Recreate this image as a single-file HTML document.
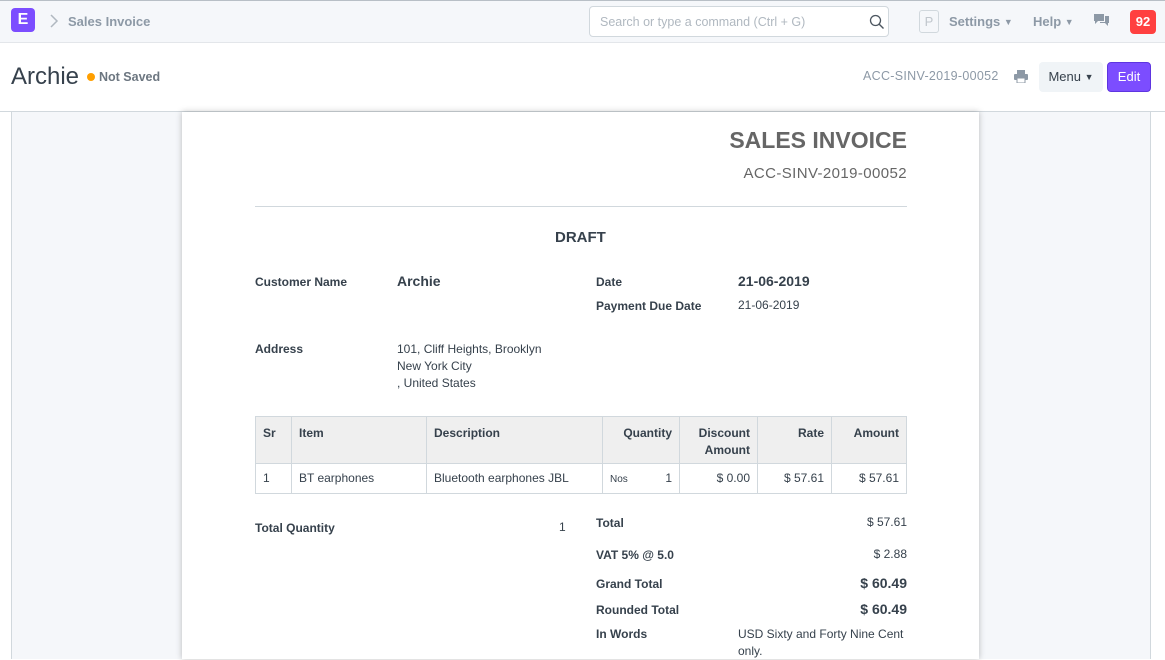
<!DOCTYPE html>
<html><head><meta charset="utf-8"><style>
*{margin:0;padding:0;box-sizing:border-box}
body{width:1165px;height:659px;overflow:hidden;background:#fff;font-family:"Liberation Sans",Arial,sans-serif;position:relative;color:#36414c}
.a{position:absolute;white-space:nowrap}
.b{font-weight:bold}
.nav{position:absolute;left:0;top:0;width:1165px;height:43px;background:#f5f7fa;border-top:1px solid #b8bfc6;border-bottom:1px solid #e3e6ea}
.pt{font-size:12px;font-weight:bold;color:#36414c}
.pv{font-size:12.5px;color:#36414c}
table{border-collapse:collapse;font-size:12px;color:#36414c}
td,th{border:1px solid #d1d8dd;padding:0 7px;vertical-align:top}
th{background:#efefef;font-weight:bold;text-align:left;height:47px;padding-top:8px;line-height:17px}
td{height:30px;padding-top:7px}
.r{text-align:right}
.car{font-size:9px;vertical-align:1px}
</style></head><body>
<div class="nav">
 <div class="a" style="left:11px;top:7px;width:24px;height:24px;background:#7c4dff;border-radius:4px;color:#fff;font-weight:bold;font-size:16px;text-align:center;line-height:24px">E</div>
 <svg class="a" style="left:49px;top:12px" width="10" height="16"><path d="M2 2 L8 8 L2 14" fill="none" stroke="#b0b8c0" stroke-width="1.5"/></svg>
 <div class="a b" style="left:68px;top:13px;font-size:13px;color:#8d99a6">Sales Invoice</div>
 <div class="a" style="left:589px;top:5px;width:300px;height:31px;background:#fff;border:1px solid #d1d8dd;border-radius:4px"></div>
 <div class="a" style="left:600px;top:14px;font-size:12.5px;color:#b0b8c0">Search or type a command (Ctrl + G)</div>
 <svg class="a" style="left:869px;top:13px" width="16" height="16"><circle cx="6.5" cy="6.5" r="5" fill="none" stroke="#4c5660" stroke-width="1.3"/><path d="M10 10 L14.5 14.5" stroke="#4c5660" stroke-width="1.4"/></svg>
 <div class="a" style="left:919px;top:9px;width:20px;height:23px;border:1px solid #d1d8dd;border-radius:3px;color:#c0c6cc;font-size:13px;text-align:center;line-height:21px">P</div>
 <div class="a b" style="left:949px;top:13px;font-size:13px;color:#8d99a6">Settings <span class="car">▼</span></div>
 <div class="a b" style="left:1033px;top:13px;font-size:13px;color:#8d99a6">Help <span class="car">▼</span></div>
 <svg class="a" style="left:1093px;top:12px" width="17" height="14"><path d="M1 1h10v7H5l-3 3V8H1z" fill="#8d99a6"/><path d="M12 3h4v7h-1v3l-3-3H7V9h5z" fill="#8d99a6"/></svg>
 <div class="a b" style="left:1130px;top:9px;width:26px;height:24px;background:#ff4040;border-radius:4px;color:#fff;font-size:13px;text-align:center;line-height:24px">92</div>
</div>
<div class="a" style="left:11px;top:63px;font-size:24px;color:#36414c">Archie</div>
<div class="a" style="left:87px;top:73px;width:8px;height:8px;border-radius:50%;background:#ff9f00"></div>
<div class="a b" style="left:99px;top:70px;font-size:12.5px;color:#6c7680">Not Saved</div>
<div class="a" style="left:863px;top:69px;font-size:12.5px;color:#8d99a6;letter-spacing:0.3px">ACC-SINV-2019-00052</div>
<svg class="a" style="left:1014px;top:70px" width="14" height="13"><rect x="3" y="0" width="8" height="4" fill="#8d99a6"/><rect x="0" y="4" width="14" height="6" rx="1" fill="#8d99a6"/><rect x="3" y="8" width="8" height="5" fill="#fff" stroke="#8d99a6"/></svg>
<div class="a" style="left:1039px;top:62px;width:64px;height:30px;background:#f0f4f7;border-radius:4px;font-size:13px;color:#36414c;text-align:center;line-height:30px">Menu <span class="car">▼</span></div>
<div class="a" style="left:1107px;top:62px;width:44px;height:30px;background:#7c4dff;border:1px solid #5e35e0;border-radius:4px;font-size:13px;color:#fff;text-align:center;line-height:28px">Edit</div>
<div class="a" style="left:0;top:111px;width:1165px;height:1px;background:#d1d8dd"></div>
<div class="a" style="left:11px;top:112px;width:1140px;height:547px;background:#f5f7fa;border-left:1px solid #d1d8dd;border-right:1px solid #d1d8dd"></div>
<div class="a" style="left:182px;top:112px;width:797px;height:547px;background:#fff;box-shadow:0 0 6px rgba(0,0,0,0.25)"></div>
<div class="a b" style="right:258px;top:127px;font-size:23px;color:#666">SALES INVOICE</div>
<div class="a" style="right:258px;top:165px;font-size:15px;color:#666;letter-spacing:0.4px">ACC-SINV-2019-00052</div>
<div class="a" style="left:255px;top:206px;width:652px;height:1px;background:#d1d8dd"></div>
<div class="a b" style="left:555px;top:229px;font-size:15px">DRAFT</div>
<div class="a pt" style="left:255px;top:275px">Customer Name</div>
<div class="a b" style="left:397px;top:273px;font-size:14px">Archie</div>
<div class="a pt" style="left:596px;top:275px">Date</div>
<div class="a b" style="left:738px;top:273px;font-size:14px">21-06-2019</div>
<div class="a pt" style="left:596px;top:299px">Payment Due Date</div>
<div class="a" style="left:738px;top:298px;font-size:12px">21-06-2019</div>
<div class="a pt" style="left:255px;top:342px">Address</div>
<div class="a pv" style="left:397px;top:341px;line-height:17px;font-size:12px">101, Cliff Heights, Brooklyn<br>New York City<br>, United States</div>
<table class="a" style="left:255px;top:416px;width:652px">
<tr><th style="width:36px">Sr</th><th style="width:135px">Item</th><th style="width:176px">Description</th><th class="r" style="width:77px">Quantity</th><th class="r" style="width:78px">Discount<br>Amount</th><th class="r" style="width:74px">Rate</th><th class="r">Amount</th></tr>
<tr><td>1</td><td>BT earphones</td><td>Bluetooth earphones JBL</td><td><span style="font-size:10px">Nos</span><span style="float:right">1</span></td><td class="r">$ 0.00</td><td class="r">$ 57.61</td><td class="r">$ 57.61</td></tr>
</table>
<div class="a pt" style="left:255px;top:521px">Total Quantity</div>
<div class="a" style="left:559px;top:520px;font-size:12px">1</div>
<div class="a pt" style="left:596px;top:516px">Total</div>
<div class="a" style="right:258px;top:515px;font-size:12px">$ 57.61</div>
<div class="a pt" style="left:596px;top:548px">VAT 5% @ 5.0</div>
<div class="a" style="right:258px;top:547px;font-size:12px">$ 2.88</div>
<div class="a pt" style="left:596px;top:577px">Grand Total</div>
<div class="a b" style="right:258px;top:575px;font-size:14px">$ 60.49</div>
<div class="a pt" style="left:596px;top:603px">Rounded Total</div>
<div class="a b" style="right:258px;top:601px;font-size:14px">$ 60.49</div>
<div class="a pt" style="left:596px;top:627px">In Words</div>
<div class="a" style="left:738px;top:626px;font-size:12px;line-height:17px">USD Sixty and Forty Nine Cent<br>only.</div>
</body></html>
